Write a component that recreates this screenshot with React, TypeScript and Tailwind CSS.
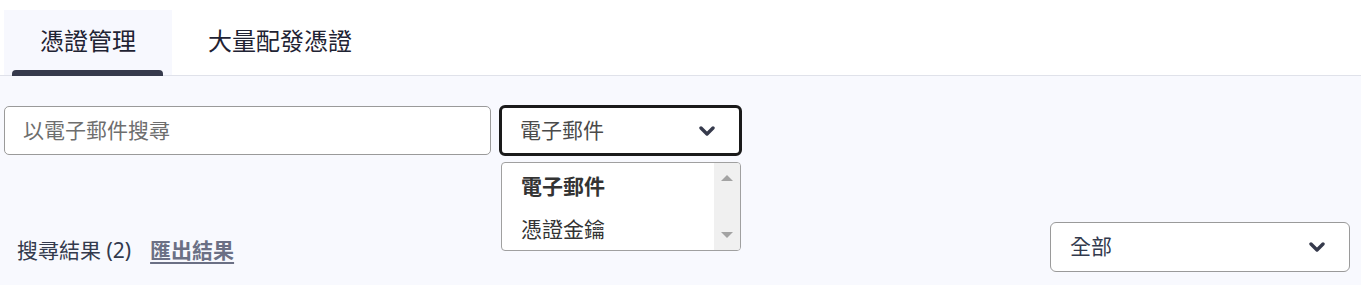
import React from "react";

function Chevron() {
  return (
    <svg width="16" height="10" viewBox="0 0 16 10" fill="none" aria-hidden>
      <path
        d="M2 2l6 6 6-6"
        stroke="#363a4c"
        strokeWidth="3.4"
        strokeLinecap="round"
        strokeLinejoin="round"
      />
    </svg>
  );
}

export default function App() {
  return (
    <div className="h-[285px] w-[1361px] overflow-hidden bg-[#f8f9fe] font-['Noto_Sans','Noto_Sans_CJK_TC',sans-serif] text-[#333a4d]">
      {/* tabs */}
      <div className="flex h-[76px] items-end border-b border-[#e0e2ea] bg-white pl-1">
        <button className="relative flex h-[65px] w-[168px] items-center justify-center bg-[#f7f8fe] pb-[3px] text-[24px] text-[#1f2333]">
          憑證管理
          <span className="absolute bottom-[-1px] left-2 right-[9px] h-[6px] rounded-t-[4px] bg-[#363a4c]" />
        </button>
        <button className="flex h-[65px] w-[216px] items-center justify-center pb-[3px] text-[24px] text-[#1f2333]">
          大量配發憑證
        </button>
      </div>

      <div className="px-1">
        <div className="mt-[29px] flex items-center gap-2">
          <div className="flex h-[49px] w-[487px] items-center rounded-[5px] border border-[#9a9a9a] bg-white px-[18px] text-[21px] text-[#6e6e6e]">
            以電子郵件搜尋
          </div>
          <div className="relative">
            <div className="flex h-[51px] w-[243px] items-center justify-between rounded-[6px] border-[3px] border-[#1a1a1a] bg-white pl-[18px] pr-[24px] text-[21px] text-[#4a4a4a]">
              <span>電子郵件</span>
              <Chevron />
            </div>
            <div className="absolute left-[2px] top-[57px] z-10 flex h-[89px] w-[240px] overflow-hidden rounded-[4px] border border-[#a0a0a0] bg-white">
              <div className="flex flex-1 flex-col pl-[19px] pt-[8px] text-[21px] text-[#333]">
                <span className="font-bold leading-[31px]">電子郵件</span>
                <span className="mt-[12px] leading-[31px]">憑證金鑰</span>
              </div>
              <div className="flex w-[26px] flex-col items-center justify-between bg-[#f0f0f0] py-[12px]">
                <span className="h-0 w-0 border-x-[6px] border-b-[6px] border-x-transparent border-b-[#a3a3a3]" />
                <span className="h-0 w-0 border-x-[6px] border-t-[6px] border-x-transparent border-t-[#a3a3a3]" />
              </div>
            </div>
          </div>
        </div>

        <div className="mt-[66px] flex items-center justify-between pr-[7px]">
          <div className="ml-[13px] mt-[7px] flex items-center gap-[19px] text-[21px]">
            <span>搜尋結果 (2)</span>
            <a className="font-bold text-[#6b7085] underline underline-offset-[4px]">
              匯出結果
            </a>
          </div>
          <div className="flex h-[50px] w-[300px] items-center justify-between rounded-[6px] border border-[#9a9a9a] bg-white pl-[19px] pr-[24px] text-[21px] text-[#333a4d]">
            <span>全部</span>
            <Chevron />
          </div>
        </div>
      </div>
    </div>
  );
}
